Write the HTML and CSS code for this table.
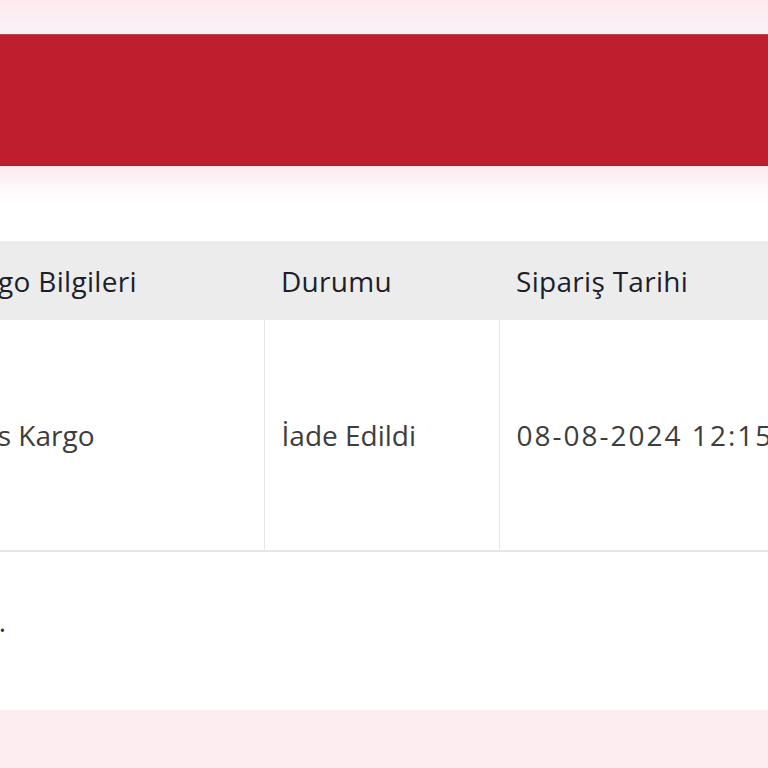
FILE: index.html
```html
<!DOCTYPE html>
<html lang="tr">
<head>
  <meta charset="UTF-8">
  <meta name="viewport" content="width=device-width, initial-scale=1.0">
  <title>Siparişlerim</title>
  <link rel="stylesheet" href="styles.css">
</head>
<body>
  <div class="top-strip"></div>
  <header class="page-banner"></header>
  <div class="banner-gap"></div>

  <div class="card">
    <table class="orders">
      <thead>
        <tr>
          <th class="col-cargo">Kargo Bilgileri</th>
          <th class="col-status">Durumu</th>
          <th class="col-date">Sipariş Tarihi</th>
        </tr>
      </thead>
      <tbody>
        <tr>
          <td class="col-cargo">Aras Kargo</td>
          <td class="col-status">İade Edildi</td>
          <td class="col-date date">08-08-2024 12:15</td>
        </tr>
      </tbody>
    </table>
    <div class="card-footer">
      <p class="note">Toplam 1 sipariş.</p>
    </div>
  </div>
</body>
</html>
```

FILE: styles.css
```css
html, body {
  margin: 0;
  padding: 0;
}
body {
  font-family: "Open Sans", "Noto Sans", sans-serif;
  background-color: #fdedf0;
  color: #333;
  overflow: hidden;
  height: 768px;
}
.top-strip {
  height: 34px;
  background: linear-gradient(#fdeaee, #f9f2f7);
}
.page-banner {
  height: 132px;
  background-color: #be1e2d;
  border-top: 1px solid #c44a52;
  border-bottom: 1px solid #a8202c;
  box-sizing: border-box;
}
.banner-gap {
  height: 34px;
  background: linear-gradient(#fdeaef, #ffffff);
}
.card {
  background-color: #fff;
  height: 510px;
  padding-top: 41px;
  box-sizing: border-box;
}
.orders {
  border-collapse: collapse;
  margin-left: -64px;
  width: 900px;
  table-layout: fixed;
}
.orders th,
.orders td {
  text-align: left;
  padding: 0 17px;
  font-size: 28px;
  font-weight: normal;
  white-space: nowrap;
}
.orders th {
  background-color: #ececec;
  height: 79px;
  color: #1e1e2a;
  font-weight: 500;
  letter-spacing: 0.3px;
}
.orders td {
  height: 230px;
  color: #3d3d3d;
  border-left: 1px solid #e6e6e6;
  border-bottom: 2px solid #e6e6e6;
}
.orders td:first-child {
  border-left: none;
}
.orders .date {
  letter-spacing: 2px;
}
.col-cargo { width: 294px; }
.col-status { width: 201px; }
.col-date { width: 335px; }
.card-footer {
  display: flex;
  justify-content: flex-end;
  width: 6px;
  padding-top: 50px;
}
.note {
  margin: 0;
  font-size: 28px;
  color: #333;
  white-space: nowrap;
}
```
